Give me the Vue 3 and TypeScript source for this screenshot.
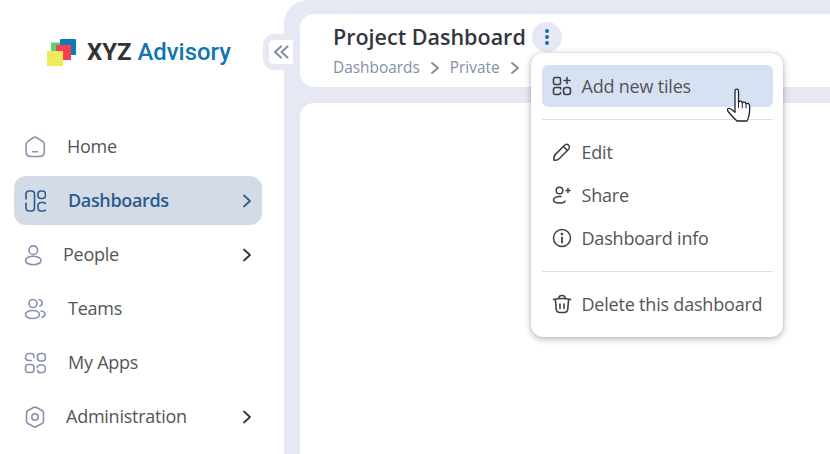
<script setup lang="ts">
interface NavItem { label: string; gap: number; chevron: boolean; active?: boolean; icon: string }
const nav: NavItem[] = [
  { label: 'Home', gap: 21, chevron: false, icon: 'home' },
  { label: 'Dashboards', gap: 22, chevron: true, active: true, icon: 'dash' },
  { label: 'People', gap: 17, chevron: true, icon: 'people' },
  { label: 'Teams', gap: 22, chevron: false, icon: 'teams' },
  { label: 'My Apps', gap: 22, chevron: false, icon: 'apps' },
  { label: 'Administration', gap: 20, chevron: true, icon: 'admin' },
]
</script>

<template>
  <div class="page">
    <aside class="sidebar">
      <div class="logo">
        <svg class="logo-mark" width="30" height="28" viewBox="0 0 30 28">
          <rect x="4" y="3.500" width="12" height="16" fill="#5dd27c" />
          <rect x="13" y="0" width="16" height="16" rx="1" fill="#1478b4" />
          <rect x="9" y="6" width="15" height="15" fill="#f63f55" />
          <rect x="0" y="12" width="16" height="15" fill="#eeea58" />
        </svg>
        <span class="logo-text"><b>XYZ</b> <span>Advisory</span></span>
      </div>
      <nav class="nav">
        <a v-for="item in nav" :key="item.label" class="nav-item" :class="{ active: item.active }" :style="{ gap: item.gap + 'px' }">
          <svg class="nav-icon" width="22" height="22" viewBox="0 0 22 22" fill="none" stroke="currentColor" stroke-width="1.600" stroke-linecap="round" stroke-linejoin="round">
            <template v-if="item.icon === 'home'">
              <path d="M9.500 1.500c.9-.6 2.100-.6 3 0l6.300 4.100c.8.500 1.200 1.100 1.300 2 .4 3.300.4 6.500-.1 9.700-.3 1.700-1.400 2.700-3 2.900-3.800.4-7.800.4-11.600 0-1.600-.2-2.700-1.200-3-2.900-.5-3.200-.5-6.400-.1-9.700.1-.9.500-1.500 1.300-2Z" />
              <path d="M8.500 15.800h5" />
            </template>
            <template v-else-if="item.icon === 'dash'">
              <path d="M2 9V4c0-1.800 1.200-3 3-3h2.500c1.800 0 3 1.200 3 3v14c0 1.800-1.200 3-3 3H5c-1.800 0-3-1.200-3-3v-5" />
              <rect x="14" y="1" width="7.500" height="7.500" rx="3" />
              <path d="M21.500 13.500c-.6-.7-1.400-1-2.400-1h-2c-1.800 0-3.100 1.200-3.100 3v2c0 2 1.300 3.500 3.100 3.500h2c1 0 1.800-.3 2.400-1" />
            </template>
            <template v-else-if="item.icon === 'people'">
              <circle cx="9.300" cy="6.200" r="4.300" />
              <ellipse cx="9.300" cy="16.500" rx="7.800" ry="4.300" />
            </template>
            <template v-else-if="item.icon === 'teams'">
              <circle cx="9" cy="5.500" r="4" />
              <path d="M15 1.800c2.500.3 3.700 2 3.200 4-.3 1.200-1.200 2-2.300 2.200" />
              <ellipse cx="8.500" cy="16.500" rx="7" ry="4" />
              <path d="M17 13c2.500.4 4 1.600 4 3.200 0 1.400-1 2.400-3 2.900" />
            </template>
            <template v-else-if="item.icon === 'apps'">
              <path d="M10 5.500V4.500c0-1.800-1.200-3-3-3H5C3 1.500 1.500 3 1.500 5S3 8.500 5 8.500h2.500" />
              <rect x="13.500" y="1.500" width="8" height="7.500" rx="3" />
              <rect x="1.500" y="12.500" width="8.500" height="8" rx="3" />
              <path d="M13.500 18.500c.3 1.300 1.500 2.300 3.500 2.300 2.500 0 4.500-1.500 4.500-4 0-2.400-2-4-4.500-4-2 0-3.500 1.100-3.900 2.900" />
            </template>
            <template v-else>
              <path d="M9.500 1.500c.9-.5 2.100-.5 3 0l5.500 3c1 .6 1.500 1.400 1.500 2.500v8c0 1.100-.5 1.900-1.500 2.500l-5.500 3c-.9.500-2.100.5-3 0L4 17.500c-1-.6-1.500-1.400-1.500-2.500V7c0-1.100.5-1.900 1.500-2.500Z" />
              <circle cx="11" cy="11" r="3.200" />
            </template>
          </svg>
          <span class="nav-label">{{ item.label }}</span>
          <svg v-if="item.chevron" class="chev" width="12" height="14" viewBox="0 0 12 14" fill="none" stroke="currentColor" stroke-width="1.700" stroke-linecap="round" stroke-linejoin="round">
            <path d="M3 1.500 9 7l-6 5.500" />
          </svg>
        </a>
      </nav>
    </aside>

    <main class="main">
      <header class="head">
        <div class="title-row">
          <h1 class="title">Project Dashboard</h1>
          <button class="kebab" type="button" aria-label="More">
            <i /><i /><i />
          </button>
        </div>
        <div class="crumbs">
          <span>Dashboards</span>
          <svg width="12" height="14" viewBox="0 0 12 14" fill="none" stroke="currentColor" stroke-width="1.800" stroke-linecap="round" stroke-linejoin="round"><path d="M3 2l6 5-6 5" /></svg>
          <span>Private</span>
          <svg width="12" height="14" viewBox="0 0 12 14" fill="none" stroke="currentColor" stroke-width="1.800" stroke-linecap="round" stroke-linejoin="round"><path d="M3 2l6 5-6 5" /></svg>
        </div>
      </header>
      <section class="content" />
    </main>

    <button class="collapse" type="button" aria-label="Collapse">
      <svg width="16" height="14" viewBox="0 0 16 14" fill="none" stroke="#8a8fa8" stroke-width="2.200" stroke-linecap="round" stroke-linejoin="round">
        <path d="M8 1.500 2 7l6 5.500" /><path d="M14.500 1.500 8.500 7l6 5.500" />
      </svg>
    </button>

    <div class="menu">
      <a class="menu-item hover">
        <svg class="mi" width="20" height="20" viewBox="0 0 20 20" fill="none" stroke="currentColor" stroke-width="1.600" stroke-linecap="round" stroke-linejoin="round">
          <rect x="1.500" y="1.500" width="7" height="7" rx="1.500" />
          <path d="M15 1.500v6M12 4.500h6" />
          <path d="M8.500 13V11.500h-5A2 2 0 0 0 1.500 13.500v3a2 2 0 0 0 2 2h3a2 2 0 0 0 2-2" />
          <rect x="11.500" y="11.500" width="7" height="7" rx="2.500" />
        </svg>
        <span>Add new tiles</span>
      </a>
      <hr class="sep first" />
      <a class="menu-item">
        <svg class="mi" width="20" height="20" viewBox="0 0 20 20" fill="none" stroke="currentColor" stroke-width="1.500" stroke-linecap="round" stroke-linejoin="round">
          <path d="M2 18.200c-.5-2.300 0-4.300 1.500-5.800L12.300 3.500c1.400-1.400 3.100-1.500 4.300-.3 1.200 1.200 1.100 2.900-.3 4.300L7.700 16.200C6.200 17.700 4.300 18.500 2 18.200Z" />
          <path d="M11.500 4.500l4 4" />
        </svg>
        <span>Edit</span>
      </a>
      <a class="menu-item">
        <svg class="mi" width="20" height="20" viewBox="0 0 20 20" fill="none" stroke="currentColor" stroke-width="1.500" stroke-linecap="round" stroke-linejoin="round">
          <circle cx="7.500" cy="5.500" r="3.300" />
          <path d="M9 11.500c-4-.4-7.500 1-7.500 3.500 0 2 2.800 3 6 3 2.500 0 4.500-.5 5.500-1.800" />
          <path d="M16 3.500v4M14 5.500h4" />
        </svg>
        <span>Share</span>
      </a>
      <a class="menu-item">
        <svg class="mi" width="20" height="20" viewBox="0 0 20 20" fill="none" stroke="currentColor" stroke-width="1.500" stroke-linecap="round" stroke-linejoin="round">
          <circle cx="10" cy="10" r="8.500" />
          <path d="M10 9.500v5" stroke-width="1.800" />
          <circle cx="10" cy="6" r=".6" fill="currentColor" />
        </svg>
        <span>Dashboard info</span>
      </a>
      <hr class="sep second" />
      <a class="menu-item">
        <svg class="mi" width="20" height="20" viewBox="0 0 20 20" fill="none" stroke="currentColor" stroke-width="1.600" stroke-linecap="round" stroke-linejoin="round">
          <path d="M1.500 5.500c5.500-1.300 11.500-1.300 17 0" />
          <path d="M7 4V3.500C7 2.200 8 1.500 10 1.500s3 .7 3 2V4" />
          <path d="M3.500 6.500l.7 8.500c.2 2.300 1.500 3.500 3.800 3.500h4c2.300 0 3.600-1.200 3.800-3.500l.7-8.500" />
          <path d="M8 10v4.500M12 10v4.500" />
        </svg>
        <span>Delete this dashboard</span>
      </a>
    </div>

    <svg class="cursor" width="26" height="38" viewBox="0 0 26 38" stroke="#222" stroke-width="1.300" stroke-linejoin="round" stroke-linecap="round" fill="#fff">
      <path d="M8 3c0-2.600 3.500-2.600 3.500 0v11c1.200-1.500 3.500-1.200 3.800.8 1.200-1.300 3.400-.9 3.700 1 1.300-1 3.300-.5 3.500 1.500.3 3.500.2 7.500-.6 10.500-.6 2.200-1.100 4-1.900 5.200H10C7.800 31 4.500 27.500 1.500 24c-1-1.300-1.300-2.500-.8-3.200.7-1 2.800-.2 4.500 1.200l2.800 2.300Z" />
      <path d="M11.500 13.500v6M15.300 14.800v5M19 15.800v4" stroke-width="1" fill="none" />
    </svg>
  </div>
</template>

<style>
html, body { margin: 0; background: #fff; }
</style>

<style scoped>
.page {
  position: relative;
  width: 830px;
  height: 454px;
  overflow: hidden;
  display: flex;
  background: #fff;
  font-family: "Open Sans", "Noto Sans", sans-serif;
  color: #444;
}
.sidebar { width: 284px; flex: none; box-sizing: border-box; padding: 0 22px 0 14px; }
.logo { height: 104px; display: flex; align-items: flex-start; padding: 39px 0 0 33px; box-sizing: border-box; gap: 10px; }
.logo-mark { flex: none; }
.logo-text { font-family: Roboto, "Liberation Sans", sans-serif; font-size: 23.900px; line-height: 27px; color: #0f76b3; font-weight: 500; white-space: nowrap; }
.logo-text b { color: #333; font-weight: 700; }
.nav { display: flex; flex-direction: column; gap: 5px; margin-top: 18px; }
.nav-item {
  display: flex; align-items: center; height: 49px; padding: 0 9px 0 10px;
  font-size: 18px; color: #555; border-radius: 12px; box-sizing: border-box;
}
.nav-icon { flex: none; color: #8a90ad; }
.nav-label { flex: 1; white-space: nowrap; letter-spacing: -.25px; padding-bottom: 2px; }
.chev { color: #333; flex: none; }
.nav-item.active { background: #d3dce6; color: #2d5a8e; font-weight: 600; }
.nav-item.active .nav-label { letter-spacing: -.35px; }
.nav-item.active .nav-icon, .nav-item.active .chev { color: #2d5a8e; }

.main { flex: 1; min-width: 0; background: #e6e8f4; border-top-left-radius: 24px; padding: 14px 0 0 16px; display: flex; flex-direction: column; gap: 16px; }
.head { height: 73px; flex: none; background: #fff; border-radius: 14px 0 0 14px; padding: 8px 0 0 33px; box-sizing: border-box; }
.title-row { display: flex; align-items: center; gap: 6px; height: 30px; }
.title { margin: 0; font-size: 21.500px; font-weight: 600; color: #333640; line-height: 30px; white-space: nowrap; }
.kebab { width: 30px; height: 30px; border: 0; border-radius: 50%; background: #e6e8f4; padding: 0; display: flex; flex-direction: column; align-items: center; justify-content: center; gap: 2px; }
.kebab i { width: 4px; height: 4px; border-radius: 50%; background: #1d6fa8; display: block; }
.crumbs { display: flex; align-items: center; gap: 9px; font-size: 15.400px; line-height: 22px; color: #8390a8; margin-top: 5px; }
.crumbs svg { color: #7d8799; flex: none; }
.content { flex: 1; background: #fff; border-radius: 14px 0 0 0; }

.collapse {
  position: absolute; left: 263px; top: 34px; width: 30px; height: 36px; padding: 0;
  background: #fff; border-width: 6px 0 6px 6px; border-style: solid; border-color: #e6e8f4; border-radius: 11px 0 0 11px; box-sizing: border-box;
  display: flex; align-items: center; justify-content: center;
}
.menu {
  position: absolute; left: 531px; top: 53px; width: 252px; height: 284px;
  box-sizing: border-box; padding: 12px 10px 0 11px;
  background: #fff; border-radius: 12px;
  box-shadow: 0 2px 7px rgba(40, 40, 60, .32), 0 0 3px rgba(40, 40, 60, .14);
  display: flex; flex-direction: column;
}
.menu-item { display: flex; align-items: center; height: 42px; padding: 0 0 0 10px; gap: 9.500px; font-size: 18px; color: #555; border-radius: 6px; flex: none; white-space: nowrap; }
.menu-item + .menu-item { margin-top: 1px; }
.menu-item.hover { background: #d6e1f4; }
.mi { flex: none; color: #3f3f3f; }
.menu-item span { letter-spacing: -.2px; }
.sep { border: 0; border-top: 1px solid #dedfe3; margin: 0; flex: none; }
.sep.first { margin: 12px 0 11px; }
.sep.second { margin: 12px 0 11px; }
.cursor { position: absolute; left: 727px; top: 88px; }
</style>
